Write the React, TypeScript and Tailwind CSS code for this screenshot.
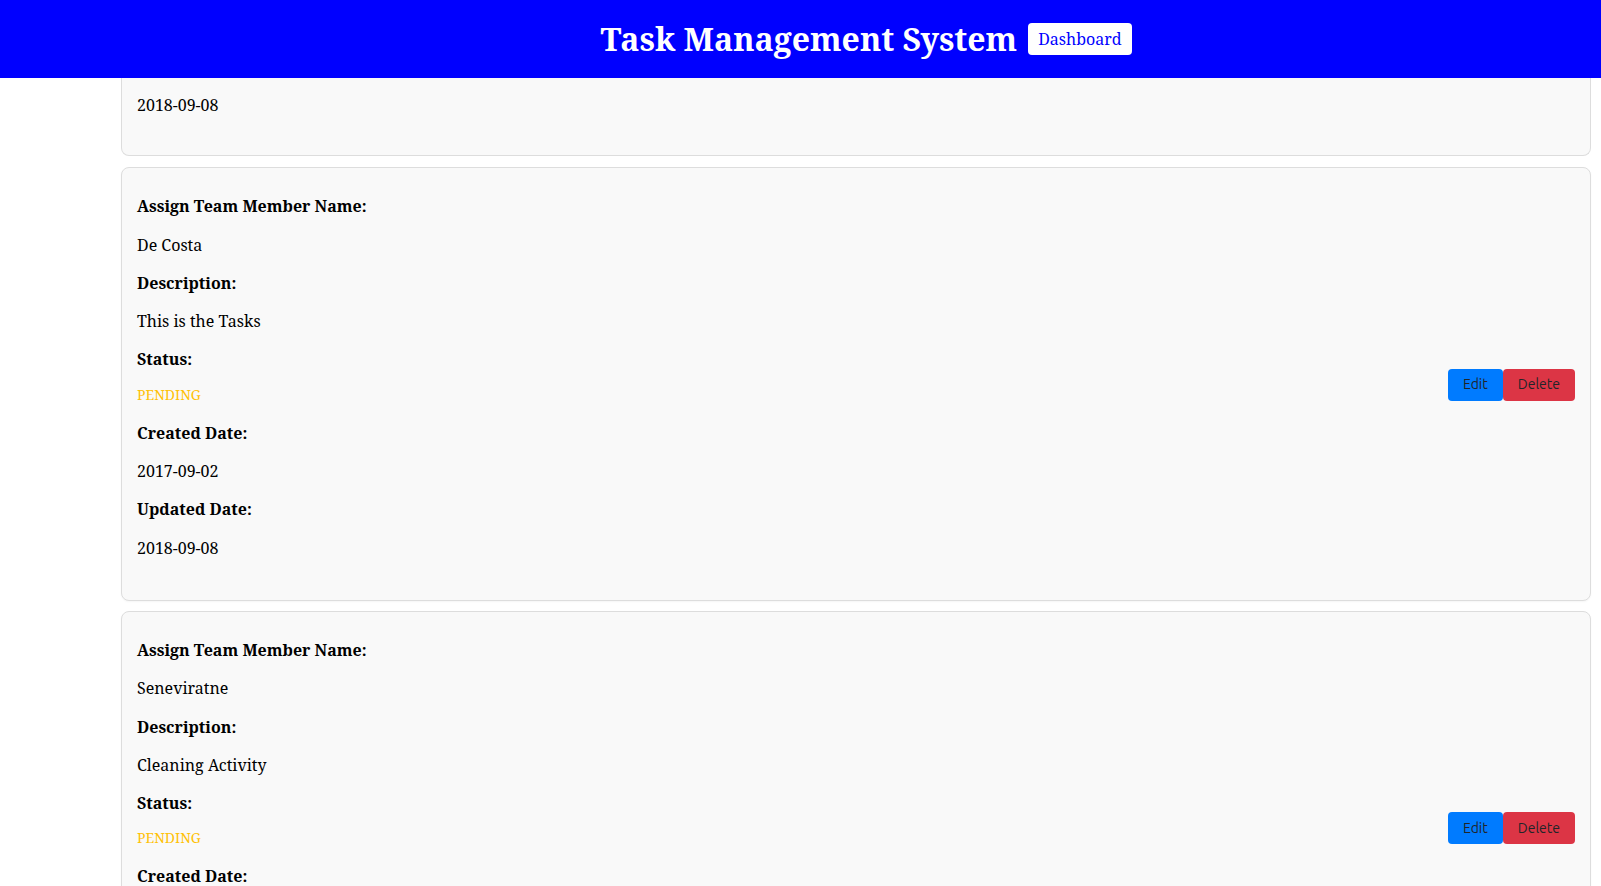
import React from 'react';

type Task = {
  member: string;
  description: string;
  status: string;
  created: string;
  updated: string;
};

const tasks: Task[] = [
  { member: 'De Costa', description: 'This is the Tasks', status: 'PENDING', created: '2017-09-02', updated: '2018-09-08' },
  { member: 'Seneviratne', description: 'Cleaning Activity', status: 'PENDING', created: '2017-09-02', updated: '2018-09-08' },
];

const serif = "font-['Noto_Serif','DejaVu_Serif',serif]";

const Field: React.FC<{ label: string; children: React.ReactNode }> = ({ label, children }) => (
  <>
    <p className="my-4 font-bold leading-[22.3px]">{label}</p>
    {children}
  </>
);

const TaskCard: React.FC<{ task: Task }> = ({ task }) => (
  <div className="mb-[10px] flex items-center justify-between rounded-lg border border-[#dddddd] bg-[#f9f9f9] px-[15px] pb-[10px] pt-[11px] shadow-[0_1px_2px_rgba(0,0,0,0.04)]">
    <div className="pb-[15px]">
      <Field label="Assign Team Member Name:">
        <p className="my-4 leading-[22.3px]">{task.member}</p>
      </Field>
      <Field label="Description:">
        <p className="my-4 leading-[22.3px]">{task.description}</p>
      </Field>
      <Field label="Status:">
        <p className="mb-[20px] mt-4 text-[14px] leading-[15px] text-[#ffc107]">{task.status}</p>
      </Field>
      <Field label="Created Date:">
        <p className="my-4 leading-[22.3px]">{task.created}</p>
      </Field>
      <Field label="Updated Date:">
        <p className="my-4 leading-[22.3px]">{task.updated}</p>
      </Field>
    </div>
    <div className="flex font-['Ubuntu','Noto_Sans',sans-serif] text-[14px] text-[#212529]">
      <button className="h-8 rounded bg-[#007bff] px-[15px]">Edit</button>
      <button className="h-8 rounded bg-[#dc3545] px-[15px]">Delete</button>
    </div>
  </div>
);

export default function App() {
  return (
    <div className={`${serif} h-screen overflow-hidden bg-white text-[16px] text-black`}>
      <header className="flex h-[78px] items-center justify-center gap-[11px] bg-[#0000ff] pl-[131px]">
        <h1 className="text-[32px] font-bold leading-none text-white">Task Management System</h1>
        <button className="h-8 rounded bg-white px-[10px] text-[16px] text-[#0000ff]">Dashboard</button>
      </header>
      <main className="ml-[121px] mr-[10px]">
        <div className="mb-[11px] rounded-b-lg border border-t-0 border-[#dddddd] bg-[#f9f9f9] px-[15px] pb-[39px] pt-[16px]">
          <p className="leading-[22.3px]">2018-09-08</p>
        </div>
        {tasks.map((t) => (
          <TaskCard key={t.member} task={t} />
        ))}
      </main>
    </div>
  );
}
